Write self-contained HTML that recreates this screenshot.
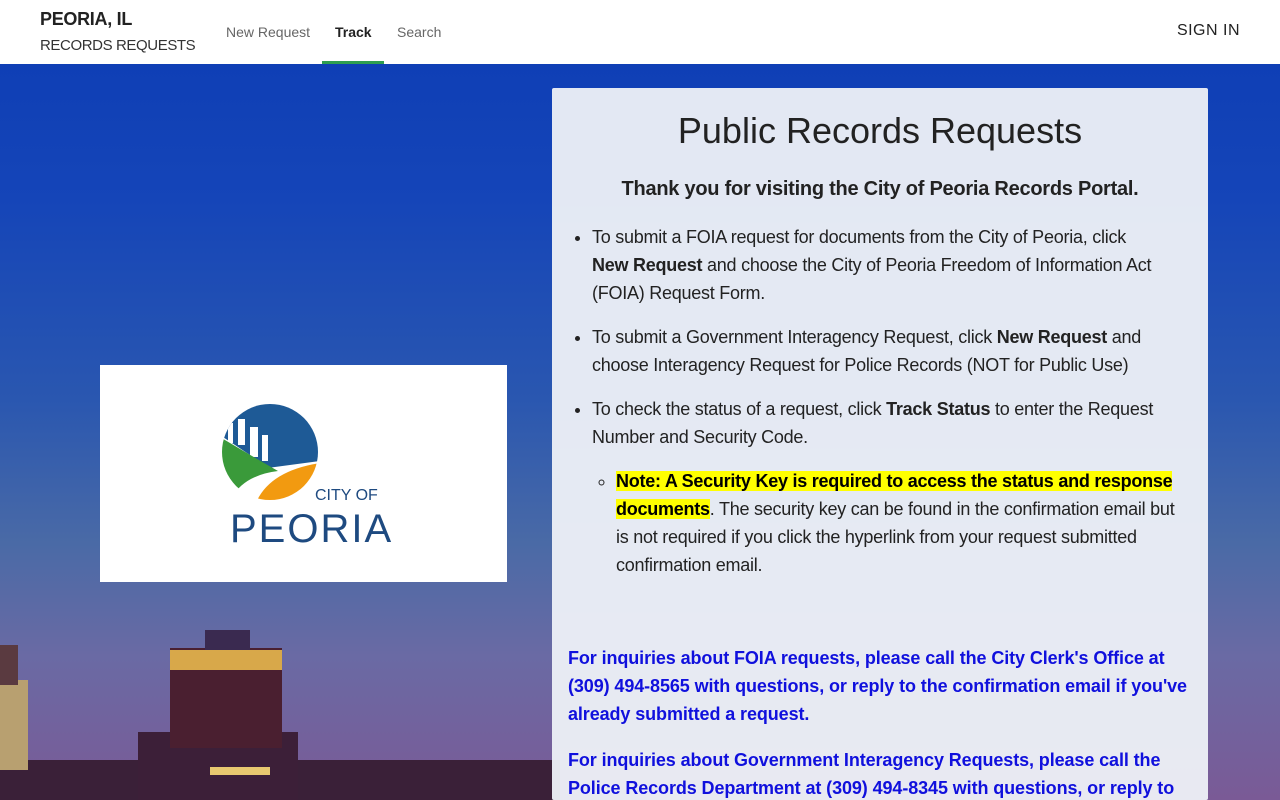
<!DOCTYPE html>
<html><head><meta charset="utf-8"><style>
*{box-sizing:border-box;margin:0;padding:0}
html,body{width:1280px;height:800px;overflow:hidden}
body{font-family:"Liberation Sans",sans-serif;position:relative;
background:linear-gradient(180deg,#0c3cb4 0%,#1545b8 25%,#2a57b0 50%,#4a6aa6 68%,#6a6aa4 82%,#7a5a96 100%)}
header{position:absolute;top:0;left:0;width:1280px;height:64px;background:#fff;z-index:5}
.t1{position:absolute;left:40px;top:9px;font-size:18px;font-weight:bold;color:#222;letter-spacing:-0.3px}
.t2{position:absolute;left:40px;top:37px;font-size:15px;color:#333;letter-spacing:-0.4px}
.nav{position:absolute;top:24px;font-size:14px;color:#666}
.tab{position:absolute;left:322px;top:61px;width:62px;height:3px;background:#2e9e4f}
.sign{position:absolute;right:40px;top:22px;font-size:16px;color:#222;letter-spacing:.5px}
.logo{position:absolute;left:100px;top:365px;width:407px;height:217px;background:#fff}
.panel{position:absolute;left:552px;top:88px;width:656px;height:712px;background:rgba(236,239,246,.96);border-radius:2px;color:#222;letter-spacing:-0.25px}
h1{font-weight:normal;font-size:36px;text-align:center;margin-top:22px;color:#222;letter-spacing:0}
h2{font-size:20px;text-align:center;margin-top:26px;font-weight:bold}
ul{margin:22px 20px 0 40px;font-size:18px;line-height:28px}
ul li{margin-bottom:16px}
ul ul{margin:0 0 0 24px;list-style:circle}
mark{background:#ff0;font-weight:bold}
.blue{color:#1010dd;font-weight:bold;font-size:18px;line-height:28px;margin:0 16px 18px 16px;letter-spacing:-0.1px}
.bld{position:absolute;background:#3a1f3a}
.win{position:absolute;background:#e8c870}
</style></head><body>
<header>
<div class="t1">PEORIA, IL</div><div class="t2">RECORDS REQUESTS</div>
<div class="nav" style="left:226px">New Request</div>
<div class="nav" style="left:335px;color:#222;font-weight:bold">Track</div>
<div class="nav" style="left:397px">Search</div>
<div class="tab"></div>
<div class="sign">SIGN IN</div>
</header>
<div class="bld" style="left:0;top:760px;width:560px;height:40px;background:#3a2038"></div>
<div class="bld" style="left:138px;top:732px;width:160px;height:70px;background:#3c1f38"></div>
<div class="bld" style="left:170px;top:648px;width:112px;height:100px;background:#4a1f30"></div>
<div class="win" style="left:170px;top:650px;width:112px;height:20px;background:#d8a84a"></div>
<div class="bld" style="left:205px;top:630px;width:45px;height:20px;background:#3a2a50"></div>
<div class="bld" style="left:0;top:680px;width:28px;height:90px;background:#b8a070"></div>
<div class="bld" style="left:0;top:645px;width:18px;height:40px;background:#5a3a40"></div>
<div class="win" style="left:210px;top:767px;width:60px;height:8px"></div>
<div class="logo">
<svg width="407" height="217" viewBox="0 0 407 217">
<defs><clipPath id="c"><circle cx="170" cy="87" r="48"/></clipPath></defs>
<g clip-path="url(#c)">
<rect x="120" y="38" width="100" height="100" fill="#fff"/>
<path d="M120 38 H220 V96 Q190 100 160 104 L150 90 L120 70 Z" fill="#1e5a96"/>
<rect x="128" y="58" width="5" height="20" fill="#fff"/><rect x="138" y="54" width="7" height="26" fill="#fff"/><rect x="150" y="62" width="8" height="30" fill="#fff"/><rect x="162" y="70" width="6" height="26" fill="#fff"/>
<path d="M120 72 Q150 90 178 106 Q145 110 132 132 L120 132 Z" fill="#3a9a3a"/>
<path d="M220 98 V140 H155 Q168 106 220 98Z" fill="#f29a10"/>
</g>
<text x="215" y="135" font-family="Liberation Sans" font-size="16" fill="#1e4a80">CITY OF</text>
<text x="130" y="177" font-family="Liberation Sans" font-size="40" fill="#1e4a80" letter-spacing="2">PEORIA</text>
</svg></div>
<div class="panel">
<h1>Public Records Requests</h1>
<h2>Thank you for visiting the City of Peoria Records Portal.</h2>
<ul>
<li>To submit a FOIA request for documents from the City of Peoria, click<br><b>New Request</b> and choose the City of Peoria Freedom of Information Act (FOIA) Request Form.</li>
<li>To submit a Government Interagency Request, click <b>New Request</b> and choose Interagency Request for Police Records (NOT for Public Use)</li>
<li>To check the status of a request, click <b>Track Status</b> to enter the Request Number and Security Code.
<ul style="margin-top:16px"><li><mark>Note: A Security Key is required to access the status and response documents</mark>. The security key can be found in the confirmation email but is not required if you click the hyperlink from your request submitted confirmation email.</li></ul></li>
</ul>
<p class="blue" style="margin-top:65px">For inquiries about FOIA requests, please call the City Clerk's Office at<br>(309) 494-8565 with questions, or reply to the confirmation email if you've already submitted a request.</p>
<p class="blue">For inquiries about Government Interagency Requests, please call the Police Records Department at (309) 494-8345 with questions, or reply to the confirmation email.</p>
</div>
</body></html>
